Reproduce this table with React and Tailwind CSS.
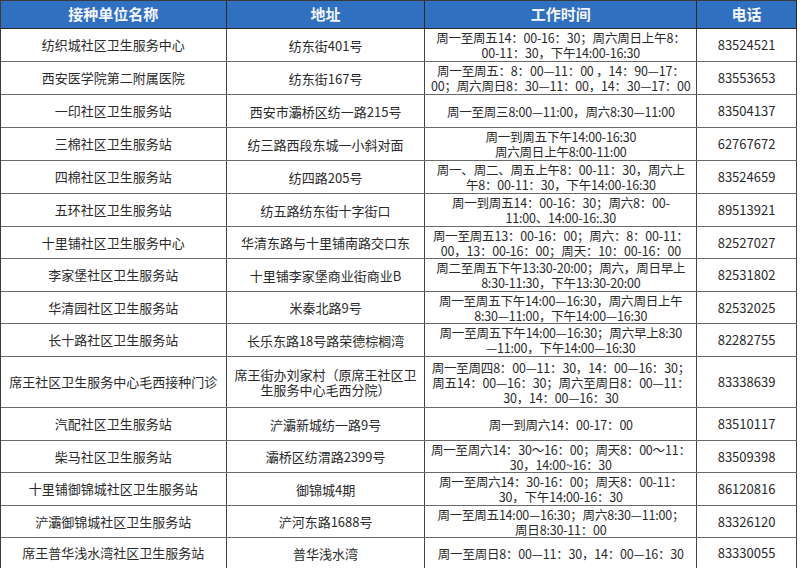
import React from "react";

const rows = [
  { h: 33, name: "纺织城社区卫生服务中心", addr: ["纺东街401号"], time: ["周一至周五14：00-16：30；周六周日上午8：", "00-11：30，下午14:00-16:30"], tel: "83524521" },
  { h: 33, name: "西安医学院第二附属医院", addr: ["纺东街167号"], time: ["周一至周五：8：00—11：00 ，14：90—17：", "00；周六周日8：30—11：00，14：30—17：00"], tel: "83553653" },
  { h: 33, name: "一印社区卫生服务站", addr: ["西安市灞桥区纺一路215号"], time: ["周一至周三8:00—11:00，周六8:30—11:00"], tel: "83504137" },
  { h: 33, name: "三棉社区卫生服务站", addr: ["纺三路西段东城一小斜对面"], time: ["周一到周五下午14:00-16:30", "周六周日上午8:00-11:00"], tel: "62767672" },
  { h: 33, name: "四棉社区卫生服务站", addr: ["纺四路205号"], time: ["周一、周二、周五上午8：00-11：30，周六上", "午8：00-11：30，下午14:00-16:30"], tel: "83524659" },
  { h: 33, name: "五环社区卫生服务站", addr: ["纺五路纺东街十字街口"], time: ["周一到周五14：00-16：30；周六8：00-", "11:00、14:00-16:.30"], tel: "89513921" },
  { h: 32, name: "十里铺社区卫生服务中心", addr: ["华清东路与十里铺南路交口东"], time: ["周一至周五13：00-16：00；周六：8：00-11：", "00，13：00-16：00；周天：10：00-16：00"], tel: "82527027" },
  { h: 33, name: "李家堡社区卫生服务站", addr: ["十里铺李家堡商业街商业B"], time: ["周二至周五下午13:30-20:00；周六，周日早上", "8:30-11:30，下午13:30-20:00"], tel: "82531802" },
  { h: 32, name: "华清园社区卫生服务站", addr: ["米秦北路9号"], time: ["周一至周五下午14:00—16:30，周六周日上午", "8:30—11:00，下午14:00—16:30"], tel: "82532025" },
  { h: 33, name: "长十路社区卫生服务站", addr: ["长乐东路18号路荣德棕榈湾"], time: ["周一至周五下午14:00—16:30；周六早上8:30", "—11:00，下午14:00—16:30"], tel: "82282755" },
  { h: 51, name: "席王社区卫生服务中心毛西接种门诊", addr: ["席王街办刘家村（原席王社区卫", "生服务中心毛西分院）"], time: ["周一至周四8：00—11：30，14：00—16：30；", "周五14：00—16：30；周六至周日8：00—11：", "30，14：00—16：30"], tel: "83338639" },
  { h: 33, name: "汽配社区卫生服务站", addr: ["浐灞新城纺一路9号"], time: ["周一到周六14：00-17：00"], tel: "83510117" },
  { h: 32, name: "柴马社区卫生服务站", addr: ["灞桥区纺渭路2399号"], time: ["周一至周六14：30～16：00；周天8：00～11：", "30，14:00~16：30"], tel: "83509398" },
  { h: 33, name: "十里铺御锦城社区卫生服务站", addr: ["御锦城4期"], time: ["周一至周六14：30-16：00；周天8：00-11：", "30，下午14:00-16：30"], tel: "86120816" },
  { h: 32, name: "浐灞御锦城社区卫生服务站", addr: ["浐河东路1688号"], time: ["周一至周五14:00—16:30；周六8:30—11:00；", "周日8:30-11：00"], tel: "83326120" },
  { h: 31, name: "席王普华浅水湾社区卫生服务站", addr: ["普华浅水湾"], time: ["周一至周日8：00—11：30，14：00—16：30"], tel: "83330055" },
];

const font = { fontFamily: '"Noto Sans CJK SC", "Noto Sans", sans-serif' };

function Lines({ lines }) {
  return (
    <div className="flex flex-col items-center leading-[15px]">
      {lines.map((l, i) => (
        <span key={i} className="whitespace-nowrap">{l}</span>
      ))}
    </div>
  );
}

export default function App() {
  return (
    <div className="w-[800px] h-[568px] bg-white overflow-hidden" style={font}>
      <div className="w-[797px] border-l border-t border-[#3a3a3a]">
        <div className="flex h-[28px] bg-[#3070c0] text-[#f4f7ff] text-[15px] font-bold border-b border-[#2a2a2a]">
          <div className="w-[226px] flex items-center justify-center border-r border-[#2a2a2a]">接种单位名称</div>
          <div className="w-[199px] flex items-center justify-center border-r border-[#2a2a2a]">地址</div>
          <div className="w-[272px] flex items-center justify-center border-r border-[#2a2a2a]">工作时间</div>
          <div className="w-[100px] flex items-center justify-center border-r border-[#2a2a2a]">电话</div>
        </div>
        {rows.map((r, i) => (
          <div key={i} className="flex text-[13px] text-[#2a2a2a] border-b border-[#6a6a6a]" style={{ height: r.h }}>
            <div className="w-[226px] flex items-center justify-center border-r border-[#444] whitespace-nowrap">{r.name}</div>
            <div className="w-[199px] flex items-center justify-center border-r border-[#444]">
              <Lines lines={r.addr} />
            </div>
            <div className="w-[272px] flex items-center justify-center border-r border-[#444] text-[12.5px] tracking-[-0.2px]">
              <Lines lines={r.time} />
            </div>
            <div className="w-[100px] flex items-center justify-center border-r border-[#444]">{r.tel}</div>
          </div>
        ))}
      </div>
    </div>
  );
}
